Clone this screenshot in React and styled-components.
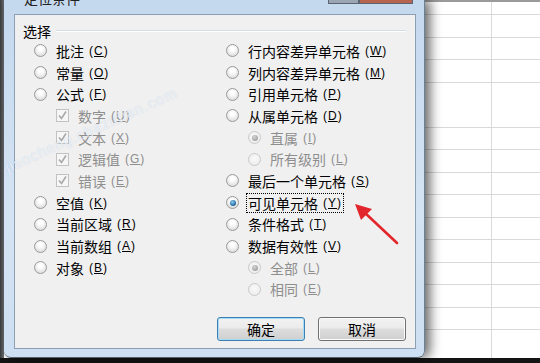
import React from "react";
import styled, { createGlobalStyle, css } from "styled-components";

const Global = createGlobalStyle`
  html, body { margin: 0; padding: 0; background: #fff; overflow: hidden; }
  * { box-sizing: border-box; }
`;

const Screen = styled.div`
  position: relative;
  width: 540px;
  height: 363px;
  display: flex;
  flex-direction: column;
  font-family: "Noto Sans CJK SC", "Liberation Sans", sans-serif;
  overflow: hidden;
`;

const Desk = styled.div`
  display: flex;
  height: 358px;
`;

const BottomBar = styled.div`
  height: 5px;
  background: #141414;
`;

const LeftEdge = styled.div`
  width: 4px;
  background: linear-gradient(to right, #3c3c3c, #6a6f75);
`;

const Window = styled.div`
  position: relative;
  z-index: 2;
  width: 421px;
  display: flex;
  flex-direction: column;
  padding: 0 8px 8px 10px;
  background: linear-gradient(to bottom, #c4d8ee, #d5e4f4 60%, #cddff2);
  border-right: 1px solid #6d7f92;
  border-bottom: 1px solid #55606b;
  border-radius: 0 0 7px 7px;
  box-shadow: 5px 0 12px rgba(0, 0, 0, 0.6);
`;

const TitleBar = styled.div`
  height: 14px;
  display: flex;
  overflow: hidden;
`;

const Title = styled.div`
  margin: -11px 0 0 10px;
  font-size: 14px;
  line-height: 18px;
  color: #222;
  flex: 1;
`;

const Caption = styled.div`
  display: flex;
  height: 4px;
  margin-right: 3px;
`;

const CaptionBtn = styled.div`
  width: ${p => p.w}px;
  background: ${p => p.bg};
  border: 1px solid #5b6470;
  border-top: none;
`;

const Panel = styled.div`
  flex: 1;
  display: flex;
  flex-direction: column;
  padding: 7px 9px 0 8px;
  background: #f0f0f0;
  border: 1px solid #8d9fb3;
`;

const GroupHead = styled.div`
  display: flex;
  align-items: center;
  height: 18px;
`;

const Legend = styled.span`
  font-size: 14px;
  line-height: 18px;
  color: #000;
  margin-right: 5px;
`;

const Rule = styled.div`
  flex: 1;
  height: 2px;
  border-top: 1px solid #d6dde3;
  border-bottom: 1px solid #ffffff;
`;

const Columns = styled.div`
  display: grid;
  grid-template-columns: 192px 1fr;
  padding-left: 11px;
`;

const Column = styled.div`
  display: flex;
  flex-direction: column;
`;

const Row = styled.div`
  height: 21.7px;
  display: flex;
  align-items: center;
  padding-left: ${p => p.indent || 0}px;
  font-size: 14px;
  color: ${p => (p.disabled ? "#8e8e8e" : "#000")};
  white-space: nowrap;
`;

const Radio = styled.span`
  position: relative;
  width: 13px;
  height: 13px;
  flex: none;
  border-radius: 50%;
  margin-right: 7px;
  border: 1px solid ${p => (p.disabled ? "#c9c9c9" : "#9a9a9a")};
  background: ${p =>
    p.disabled
      ? "radial-gradient(circle at 50% 40%, #fafafa, #e9e9e9)"
      : "radial-gradient(circle at 50% 35%, #ffffff 20%, #d8d8d8 90%)"};
  ${p =>
    p.checked &&
    css`
      &::after {
        content: "";
        position: absolute;
        left: 2.5px;
        top: 2.5px;
        width: 6px;
        height: 6px;
        border-radius: 50%;
        background: ${p.disabled
          ? "radial-gradient(circle at 40% 35%, #d4d4d4, #8e8e8e)"
          : "radial-gradient(circle at 40% 35%, #8fd0f6, #1a5f98 70%, #0b3d6b)"};
      }
    `}
`;

const Check = styled.span`
  width: 13px;
  height: 13px;
  flex: none;
  margin-right: 7px;
  border: 1px solid #c2c2c2;
  background: #f6f6f6;
  display: flex;
  align-items: center;
  justify-content: center;
`;

const Label = styled.span`
  display: inline-flex;
  align-items: center;
  padding: 0 1px;
  border: 1px dotted ${p => (p.focused ? "#000" : "transparent")};
  line-height: 18px;
`;

const Key = styled.span`
  font-family: "Liberation Sans", sans-serif;
  font-size: 12px;
  margin-left: 5px;
  letter-spacing: 1px;
  u { text-underline-offset: 1px; }
`;

const ButtonRow = styled.div`
  display: flex;
  justify-content: flex-end;
  gap: 13px;
  margin-top: 17px;
`;

const Button = styled.div`
  width: 88px;
  height: 24px;
  display: flex;
  align-items: center;
  justify-content: center;
  font-size: 14px;
  color: #000;
  border-radius: 3px;
  border: 1px solid ${p => (p.primary ? "#3c7fb1" : "#707070")};
  background: linear-gradient(to bottom, #f2f2f2 0%, #ebebeb 45%, #dddddd 50%, #cfcfcf 100%);
  box-shadow: inset 0 0 0 1px ${p => (p.primary ? "#a6dcf6" : "#fbfbfb")};
`;

const Sheet = styled.div`
  flex: 1;
  border-top: 2px solid #9a9a9a;
  background-color: #fff;
  background-image:
    linear-gradient(to right, transparent 66px, #dadada 66px, #dadada 67px, transparent 67px),
    repeating-linear-gradient(to bottom, #fff 0, #fff 21.5px, #d9d9d9 21.5px, #d9d9d9 22.5px);
  background-position: 0 0, 0 -9px;
`;

const Watermark = styled.div`
  position: absolute;
  left: 2px;
  top: 160px;
  transform: rotate(-24deg);
  transform-origin: left top;
  font-family: "Liberation Sans", sans-serif;
  font-size: 15px;
  letter-spacing: 1px;
  color: rgba(255, 255, 255, 0.7);
  text-shadow: 0 0 1px rgba(90, 130, 190, 0.35);
  pointer-events: none;
  z-index: 3;
`;

const Arrow = styled.svg`
  position: absolute;
  left: 350px;
  top: 198px;
  z-index: 3;
`;

const Acc = ({ k }) => (
  <Key>
    (<u>{k}</u>)
  </Key>
);

const CheckMark = () => (
  <svg width="11" height="11" viewBox="0 0 11 11">
    <path d="M2 5.5 L4.5 8.5 L9 1.5" fill="none" stroke="#a8a8a8" strokeWidth="1.6" />
  </svg>
);

const left = [
  { t: "批注", k: "C" },
  { t: "常量", k: "O" },
  { t: "公式", k: "F" },
  { t: "数字", k: "U", box: true },
  { t: "文本", k: "X", box: true },
  { t: "逻辑值", k: "G", box: true },
  { t: "错误", k: "E", box: true },
  { t: "空值", k: "K" },
  { t: "当前区域", k: "R" },
  { t: "当前数组", k: "A" },
  { t: "对象", k: "B" },
];

const right = [
  { t: "行内容差异单元格", k: "W" },
  { t: "列内容差异单元格", k: "M" },
  { t: "引用单元格", k: "P" },
  { t: "从属单元格", k: "D" },
  { t: "直属", k: "I", sub: true, checked: true },
  { t: "所有级别", k: "L", sub: true },
  { t: "最后一个单元格", k: "S" },
  { t: "可见单元格", k: "Y", checked: true, focused: true },
  { t: "条件格式", k: "T" },
  { t: "数据有效性", k: "V" },
  { t: "全部", k: "L", sub: true, checked: true },
  { t: "相同", k: "E", sub: true },
];

const Item = ({ t, k, box, sub, checked, focused }) => {
  const disabled = box || sub;
  return (
    <Row indent={disabled ? 22 : 0} disabled={disabled}>
      {box ? (
        <Check>
          <CheckMark />
        </Check>
      ) : (
        <Radio checked={checked} disabled={disabled} />
      )}
      <Label focused={focused}>
        {t}
        <Acc k={k} />
      </Label>
    </Row>
  );
};

export default function App() {
  return (
    <>
      <Global />
      <Screen>
        <Desk>
          <LeftEdge />
          <Window>
            <TitleBar>
              <Title>定位条件</Title>
              <Caption>
                <CaptionBtn w={31} bg="#9aa6b4" />
                <CaptionBtn w={54} bg="#b7654f" />
              </Caption>
            </TitleBar>
            <Panel>
              <GroupHead>
                <Legend>选择</Legend>
                <Rule />
              </GroupHead>
              <Columns>
                <Column>
                  {left.map((it, i) => (
                    <Item key={i} {...it} />
                  ))}
                </Column>
                <Column>
                  {right.map((it, i) => (
                    <Item key={i} {...it} />
                  ))}
                </Column>
              </Columns>
              <ButtonRow>
                <Button primary>确定</Button>
                <Button>取消</Button>
              </ButtonRow>
            </Panel>
          </Window>
          <Sheet />
        </Desk>
        <BottomBar />
        <Watermark>jiaocheng.chazidian.com</Watermark>
        <Arrow width="56" height="52" viewBox="0 0 56 52">
          <line x1="47" y1="45" x2="14" y2="14" stroke="#e3262c" strokeWidth="2.6" strokeLinecap="round" />
          <polygon points="5,6 22,11 11,22" fill="#e3262c" />
        </Arrow>
      </Screen>
    </>
  );
}
